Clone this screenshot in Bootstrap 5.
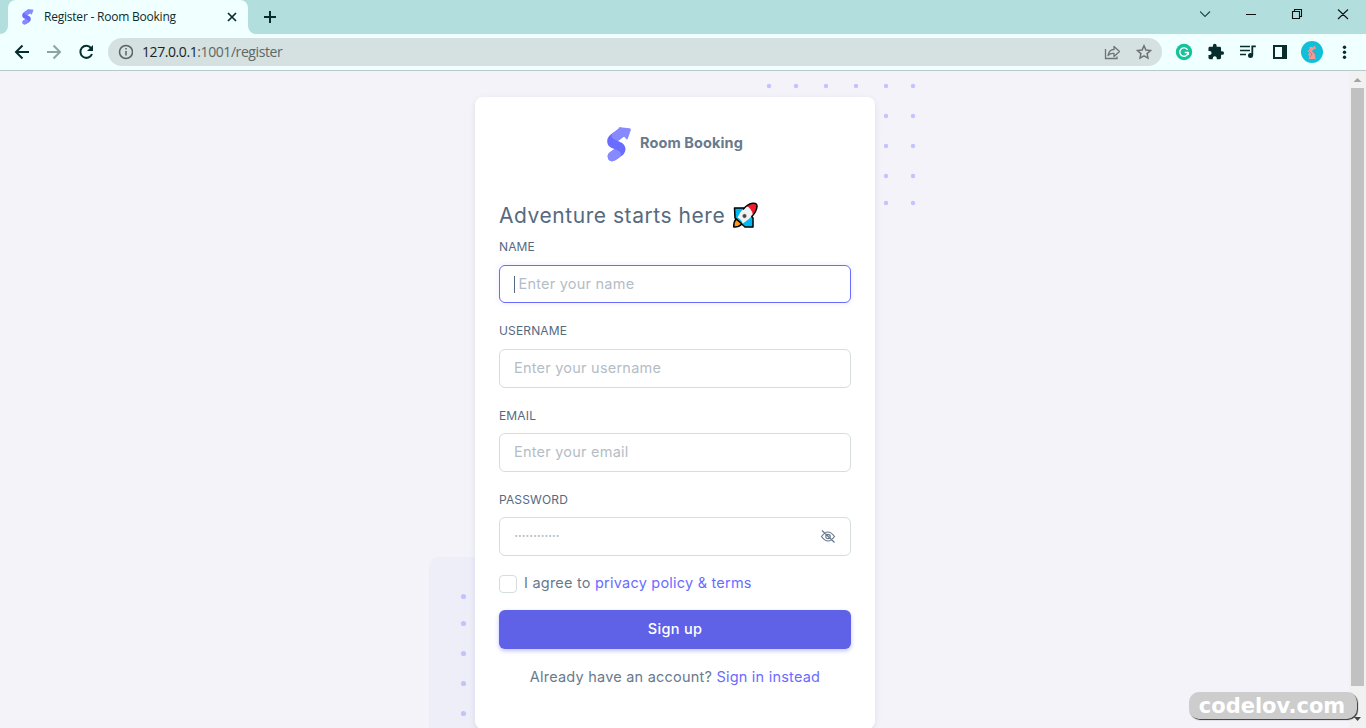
<!DOCTYPE html>
<html lang="en">
<head>
<meta charset="utf-8">
<meta name="viewport" content="width=device-width, initial-scale=1">
<title>Register - Room Booking</title>
<link href="https://cdn.jsdelivr.net/npm/bootstrap@5.3.0/dist/css/bootstrap.min.css" rel="stylesheet">
<style>
  body { font-family: Inter, "Liberation Sans", sans-serif; font-size: 14.5px; line-height: 22px; color: #697a8d; background: #f5f5f9; }
  svg { display: block; flex: none; }
  .tab-strip { height: 34px; background: #b2dfdd; }
  .browser-tab { width: 240px; margin-left: 8px; padding: 0 9px 0 14px; background: #f0ffff; border-radius: 8px 8px 0 0; position: relative; font: 12px/34px "Open Sans", sans-serif; color: #0c2b2b; }
  .tab-curve { position: absolute; bottom: 0; width: 8px; height: 8px; }
  .tab-title { letter-spacing: -.22px; margin-left: 10px; }
  .toolbar { height: 37px; background: #f0ffff; border-bottom: 1px solid #b7c9c9; }
  .address { width: 1054px; height: 28px; margin-left: 14px; border-radius: 14px; background: #d5e1e0; font: 14px/28px "Open Sans", sans-serif; color: #5c6767; }
  .address-url { margin-left: 9px; letter-spacing: -.42px; }
  .viewport { height: 657px; background: #f4f3f9; }
  .scroll-track { width: 17px; background: #f1f1f1; }
  .scroll-thumb { width: 13px; height: 598px; background: #c1c1c1; }
  .decor { position: absolute; left: 0; top: 0; }
  .auth-card { width: 400px; height: 632px; margin: 26px 0 0 475px; padding: 30px 24px 0; border: 0; border-radius: 8px; box-shadow: 0 2px 6px rgba(67,89,113,.12); color: #697a8d; letter-spacing: .22px; }
  .brand { height: 36px; gap: 8px; margin-left: 108px; }
  .brand-name { font-weight: 700; font-size: 14.5px; color: #697a8d; letter-spacing: .1px; margin-top: -5px; }
  .headline { font-size: 21px; font-weight: 400; line-height: 28px; color: #566a7f; margin: 39px 0 0; letter-spacing: .55px; gap: 7px; }
  .headline svg { margin-top: -1px; }
  .field-label { font-size: 12px; line-height: 18px; color: #566a7f; margin: 0 0 9px; letter-spacing: .15px; }
  .field-label.nudge { padding-top: 1px; margin-bottom: 8px; }
  .field-block { height: 84.1px; }
  .auth-card .form-control { height: 38.5px; font-size: 14.5px; letter-spacing: .23px; padding: 0 14px 1.5px; border: 1px solid #d4dedf; border-radius: 6px; color: #697a8d; box-shadow: none; }
  .form-control::placeholder { color: #b4bdc6; opacity: 1; }
  .auth-card .name-input { height: 38px; border-color: #696cff; box-shadow: 0 0 4px 1px rgba(105,108,255,.1); padding-left: 18.5px; }
  .auth-card .password-input { letter-spacing: -.4px; }
  .caret { position: absolute; left: 15px; top: 11px; width: 1px; height: 17px; background: #566a7f; }
  .eye { position: absolute; right: 15px; top: 12px; }
  .agree { gap: 7px; }
  .agree label { margin-top: -2px; }
  .auth-card .form-check-input { width: 18px; height: 18px; margin: 0; float: none; border: 1px solid #d4dedf; border-radius: 4px; }
  .auth-card a { color: #696cff; text-decoration: none; }
  .signup { height: 39px; background: #5f61e6; border: 0; border-radius: 6px; color: #fff; font-size: 14.5px; font-weight: 500; letter-spacing: .3px; padding: 0 0 2px; box-shadow: 0 2px 4px rgba(105,108,255,.4); }
  .signin-line { margin: 17px 0 0; }
  .watermark { position: absolute; left: 1189px; top: 692px; width: 168px; height: 27px; padding-right: 2px; border-radius: 10px; background: #cdcdcd; box-shadow: 1px 1px 1px #333; color: #fff; font: bold 21px/28px "DejaVu Sans", sans-serif; text-align: center; }
</style>
</head>
<body class="overflow-hidden position-relative">
<header>
  <div class="tab-strip d-flex">
    <div class="browser-tab d-flex align-items-center">
      <svg class="tab-curve" style="left:-8px" viewBox="0 0 8 8"><path d="M8 0v8H0a8 8 0 0 0 8-8" fill="#f0ffff"/></svg>
      <svg width="12" height="16" viewBox="0 0 25 34"><use href="#logo"/></svg>
      <span class="tab-title flex-grow-1">Register - Room Booking</span>
      <svg width="14" height="14" viewBox="0 0 14 14" stroke="#062c2c" stroke-width="1.7"><path d="m3 3 8 8m0-8-8 8"/></svg>
      <svg class="tab-curve" style="right:-8px" viewBox="0 0 8 8"><path d="M0 0v8h8a8 8 0 0 1-8-8" fill="#f0ffff"/></svg>
    </div>
    <svg class="ms-3" width="12" height="34" viewBox="0 0 12 34" stroke="#062c2c" stroke-width="2"><path d="M0 17h12M6 11v12"/></svg>
    <svg class="ms-auto" width="166" height="34" viewBox="1200 0 166 34" fill="none" stroke="#111" stroke-width="1"><path d="m1200 11.500 5 5 5-5" stroke="#244" stroke-width="1.1"/><path d="M1246 14.500h10M1292.500 11.500h7v7h-7zM1294.500 11V9.500h7v7H1300M1338 9.500l10 9.500m0-9.500-10 9.500" stroke-width="1.1"/></svg>
  </div>
  <div class="toolbar d-flex align-items-center">
    <svg width="94" height="36" viewBox="0 0 94 36" fill="none" stroke="#062c2c" stroke-width="2"><path d="M29 18H16.500m6-6.500L16 18l6.500 6.500"/><path d="M47 18h12.500m-6-6.500L60 18l-6.500 6.500" stroke="#8ca4a5"/><path d="M91 14a6 6 0 1 0 1 6"/><path d="M93 11v6h-6z" fill="#062c2c" stroke="none"/></svg>
    <div class="address d-flex align-items-center">
      <svg class="ms-2" width="17" height="18" viewBox="-.500 0 17 18" fill="none" stroke="#596363" stroke-width="1.500"><circle cx="9.500" cy="9" r="6.500"/><path d="M9.500 8v4.500M9.500 5v1.500"/></svg>
      <span class="address-url flex-grow-1"><span style="color:#152525">127.0.0.1</span>:1001/register</span>
      <svg width="60" height="28" viewBox="1102 38 60 28" fill="none" stroke="#6d7374" stroke-width="1.300"><path d="M1105.500 49v9.500H1117v-2"/><path d="M1108 55.500q1-6 6-6v-3l5.500 5-5.500 5v-3q-4-.5-6 2z" stroke-linejoin="round"/><path d="m1144 45.800 1.900 4.200 4.600.500-3.400 3.100.900 4.500-4-2.300-4 2.300.900-4.500-3.400-3.100 4.600-.5z" stroke-width="1.500"/></svg>
    </div>
    <svg width="204" height="36" viewBox="1162 34 204 36">
      <circle cx="1184" cy="52" r="8.200" fill="#15c39a"/><path d="M1187.600 49.800a4.200 4.200 0 1 0 .400 3.700m.2 1.500v-2.500h-3.500" fill="none" stroke="#fff" stroke-width="1.400"/>
      <path transform="translate(1207 43) scale(.74)" d="M20.500 11H19V7a2 2 0 0 0-2-2h-4V3.500a2.500 2.500 0 0 0-5 0V5H4a2 2 0 0 0-2 2v3.800h1.500a2.700 2.700 0 0 1 0 5.400H2V20a2 2 0 0 0 2 2h3.800v-1.500a2.700 2.700 0 0 1 5.400 0V22H17a2 2 0 0 0 2-2v-4h1.500a2.500 2.500 0 0 0 0-5z" fill="#062c2c"/>
      <path d="M1240 46.500h10M1240 50.500h10M1240 54.500h6" stroke="#062c2c" stroke-width="1.600"/><circle cx="1250.500" cy="55.500" r="2.500" fill="#062c2c"/><path d="M1252.300 55.500v-9.200h3.500" fill="none" stroke="#062c2c" stroke-width="1.800"/>
      <path d="M1273 45h14v14h-14zM1275 47v10h7V47z" fill="#062c2c" fill-rule="evenodd"/>
      <circle cx="1312" cy="52" r="11" fill="#12bfd8"/>
      <path d="M1309 47.500q3-1.500 4 0l2.500-2.500-.5 2.500 1.500.5-3 1.500c-1 1-2 1-1 2.500 2 1.500 3 3 2.500 4.500l.8 2.500h-6.500q-1.500-.5 0-2l-1-2.500 1-2-2-1.500 2.500-1.500z" fill="#f49a96"/><path d="m1309 51 3 3-2 3m4-6 1 2" stroke="#d9666c" fill="none" stroke-width=".8"/>
      <g fill="#062c2c"><circle cx="1344.500" cy="47.300" r="1.700"/><circle cx="1344.500" cy="52.300" r="1.700"/><circle cx="1344.500" cy="57.300" r="1.700"/></g>
    </svg>
  </div>
</header>
<div class="viewport d-flex position-relative overflow-hidden">
  <svg class="decor" width="1340" height="657" viewBox="0 71 1340 657">
    <defs>
      <g id="logo">
        <path d="M13.790.360 3.400 7.440C.57 9.690-.38 12.480.560 15.800c.13.430.540 1.990 2.560 3.430.69.490 2.200 1.150 4.530 1.990L2.630 24.550C.45 26.300.09 28.510 1.560 31.170c1.280 1.650 3.650 2.090 5.530 1.370 1.260-.48 4.370-2.540 9.330-6.170 1.610-1.870 2.280-3.920 1.990-6.130-.45-2.710-2.230-4.660-5.360-5.870l-2.130-.9 7.700-5.490z" fill="#696cff"/>
        <path d="M13.790.360 5.470 6C4.050 8.220 4.360 10.070 6.400 11.570c2.210 1 3.700 1.650 4.460 1.940l7.760-5.530z" fill="#878aff"/>
        <path d="m7.500 21.230 4.820 2.090c1.850 1.440 2.080 3.170.690 5.190l-5.920 4.030C5.210 33.260 2.840 32.820 1.560 31.170.09 28.510.45 26.300 2.630 24.550z" fill="#878aff"/>
        <path d="M11.500 2.200V1.500Q11.500.3 13 .3l9.500.9q1.700.2 1.200 1.900L20.800 11.200q-.7 1.300-1.800.2l-2-2.300z" fill="#878aff"/>
      </g>
    </defs>
    <g fill="#c3c4ff">
      <g id="dotcol"><circle cx="913" cy="86" r="2.200"/><circle cx="913" cy="116" r="2.200"/><circle cx="913" cy="146" r="2.200"/><circle cx="913" cy="176" r="2.200"/><circle cx="913" cy="203" r="2.200"/></g>
      <use href="#dotcol" x="-27"/>
      <circle cx="769" cy="86" r="2.200"/><circle cx="796" cy="86" r="2.200"/><circle cx="826" cy="86" r="2.200"/><circle cx="856" cy="86" r="2.200"/>
    </g>
    <rect x="429" y="557" width="200" height="220" rx="10" fill="#eeeef9"/>
    <g fill="#c3c4ff"><circle cx="463.500" cy="596.500" r="2.600"/><circle cx="463.500" cy="623.500" r="2.600"/><circle cx="463.500" cy="653.500" r="2.600"/><circle cx="463.500" cy="683.500" r="2.600"/><circle cx="463.500" cy="713.500" r="2.600"/></g>
  </svg>
  <main class="card auth-card">
    <div class="brand d-flex align-items-center">
      <svg width="25" height="36" viewBox="0 0 25 34.600" preserveAspectRatio="none"><use href="#logo"/></svg>
      <span class="brand-name">Room Booking</span>
    </div>
    <h4 class="headline d-flex align-items-center"><span>Adventure starts here</span>
      <svg width="27" height="27" viewBox="0 0 27 27" stroke="#000" stroke-width="1.500" stroke-linejoin="round">
        <path d="M2.500 6H12l9 10v9h-8l-10-9z" fill="#00b7ef"/>
        <path d="M4 17q-2.500 3-2.200 8 5 .2 8.200-3z" fill="#ff9b1a"/>
        <path d="M5.500 15.500Q12 2 21 1.200q4.500-.2 4 3.500-.8 8-14.500 17-.5-4-5-6.200z" fill="#f2f2f2" stroke="none"/>
        <path d="M14.500 4Q19 1.300 22 1.200q3.500.1 3 3.500-.8 4.500-4.300 7.800-1.300-6.500-6.200-8.500z" fill="#f01c2c" stroke="none"/>
        <path d="M11 7.500Q15.500 1.700 21 1.200q4.500-.2 4 3.500-.5 5-5.500 10" fill="none"/>
        <circle cx="12.500" cy="14" r="1.900" fill="#444" stroke="#888" stroke-width=".5"/>
      </svg>
    </h4>
    <form class="mt-2">
      <div class="field-block"><label class="field-label d-block" for="name">NAME</label><div class="position-relative"><input id="name" class="form-control name-input" placeholder="Enter your name"><span class="caret"></span></div></div>
      <div class="field-block"><label class="field-label d-block" for="username">USERNAME</label><input id="username" class="form-control" placeholder="Enter your username"></div>
      <div class="field-block"><label class="field-label nudge d-block" for="email">EMAIL</label><input id="email" class="form-control" placeholder="Enter your email"></div>
      <div class="field-block"><label class="field-label nudge d-block" for="password">PASSWORD</label>
        <div class="position-relative"><input id="password" class="form-control password-input" placeholder="············">
          <svg class="eye" width="16" height="15" viewBox="0 0 16 15" fill="none" stroke="#697a8d" stroke-width="1.200"><path d="M1.500 7.500q6.500-9 13 0-6.500 9-13 0zM2 1.500l12.500 12"/><circle cx="8" cy="7.500" r="2.200"/></svg></div></div>
      <div class="agree d-flex align-items-center"><input class="form-check-input" type="checkbox" id="terms"><label for="terms">I agree to <a href="#">privacy policy &amp; terms</a></label></div>
      <button type="button" class="btn signup w-100 mt-3">Sign up</button>
    </form>
    <p class="text-center signin-line">Already have an account? <a href="#">Sign in instead</a></p>
  </main>
  <div class="scroll-track ms-auto d-flex flex-column align-items-center">
    <svg width="17" height="17" viewBox="0 0 17 17"><path d="m4.500 11 4-4 4 4z" fill="#a3a3a3"/></svg>
    <div class="scroll-thumb"></div>
    <svg class="mt-auto" width="17" height="17" viewBox="0 0 17 17"><path d="m5 6 3.500 4L12 6z" fill="#444"/></svg>
  </div>
</div>
<div class="watermark">codelov.com</div>
<script src="https://cdn.jsdelivr.net/npm/bootstrap@5.3.0/dist/js/bootstrap.bundle.min.js"></script>
</body>
</html>
